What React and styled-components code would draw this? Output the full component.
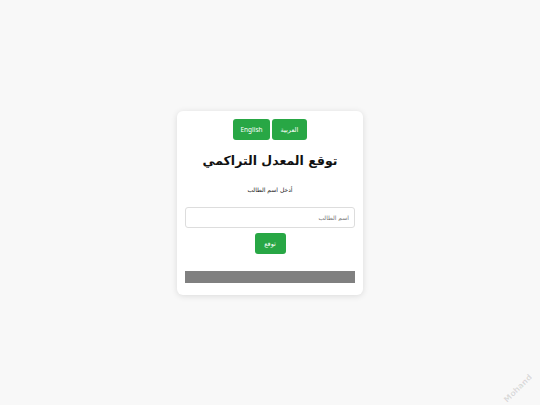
import { createGlobalStyle, styled } from "styled-components";

const GlobalStyle = createGlobalStyle`
  html, body {
    margin: 0;
    padding: 0;
    height: 100%;
  }
  body {
    background: #f8f8f8;
    font-family: "Noto Sans", "DejaVu Sans", sans-serif;
  }
  #root {
    height: 100%;
  }
`;

const Page = styled.div`
  height: 100vh;
  display: flex;
  align-items: center;
  justify-content: center;
  overflow: hidden;
  position: relative;
`;

const Card = styled.div`
  width: 186px;
  box-sizing: border-box;
  padding: 8px 8px 12px;
  background: #fff;
  border-radius: 6px;
  box-shadow: 0 1px 6px rgba(0, 0, 0, 0.12);
  display: flex;
  flex-direction: column;
  align-items: center;
  direction: rtl;
`;

const LangRow = styled.div`
  display: flex;
  direction: ltr;
  gap: 2px;
`;

const GreenButton = styled.button`
  background: #28a745;
  color: #fff;
  border: none;
  border-radius: 3px;
  height: 21px;
  width: ${(p) => p.$w}px;
  padding: 0;
  font-family: "Noto Sans", "DejaVu Sans", sans-serif;
  font-size: 6.5px;
  cursor: pointer;
`;

const Title = styled.h1`
  margin: 11px 0 0;
  font-family: "DejaVu Sans", sans-serif;
  font-size: 12.5px;
  font-weight: bold;
  color: #111;
  line-height: 20px;
`;

const Label = styled.div`
  margin-top: 14px;
  font-family: "DejaVu Sans", sans-serif;
  font-size: 6px;
  line-height: 10px;
  color: #222;
`;

const Input = styled.input`
  margin-top: 12px;
  width: 170px;
  height: 21px;
  box-sizing: border-box;
  border: 1px solid #ddd;
  border-radius: 3px;
  padding: 0 5px;
  font-family: "DejaVu Sans", sans-serif;
  font-size: 6px;
  direction: rtl;
  outline: none;
  &::placeholder {
    color: #777;
  }
`;

const SubmitWrap = styled.div`
  margin-top: 5px;
  display: flex;
`;

const ResultBar = styled.div`
  margin-top: 17px;
  width: 170px;
  height: 12px;
  background: #808080;
`;

const Watermark = styled.div`
  position: absolute;
  right: 4px;
  bottom: 12px;
  transform: rotate(-45deg);
  font-family: "DejaVu Sans", sans-serif;
  font-size: 8px;
  font-weight: bold;
  color: rgba(0, 0, 0, 0.12);
`;

export default function App() {
  return (
    <>
      <GlobalStyle />
      <Page>
        <Card>
          <LangRow>
            <GreenButton $w={37}>English</GreenButton>
            <GreenButton $w={35}>العربية</GreenButton>
          </LangRow>
          <Title>توقع المعدل التراكمي</Title>
          <Label>أدخل اسم الطالب</Label>
          <Input placeholder="اسم الطالب" />
          <SubmitWrap>
            <GreenButton $w={31}>توقع</GreenButton>
          </SubmitWrap>
          <ResultBar />
        </Card>
        <Watermark>Mohand</Watermark>
      </Page>
    </>
  );
}
